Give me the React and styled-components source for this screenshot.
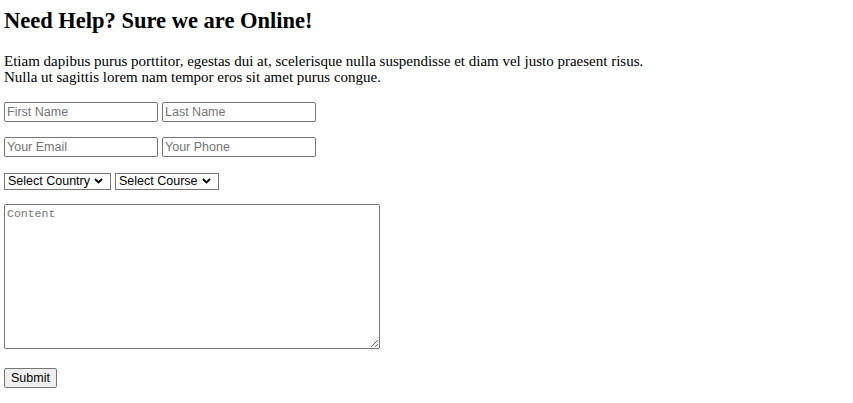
import React from "react";
import styled, { createGlobalStyle } from "styled-components";

const GlobalStyle = createGlobalStyle`
  html, body {
    margin: 0;
    padding: 0;
    background: #fff;
  }
  body {
    font-family: "Liberation Serif", "Times New Roman", serif;
    color: #000;
  }
`;

const Page = styled.div`
  padding: 8px 4px;
`;

const Title = styled.h2`
  margin: 0 0 19px;
  font-size: 22.5px;
  font-weight: 700;
  line-height: 26px;
`;

const Intro = styled.p`
  margin: 0;
  font-size: 15px;
  line-height: 16px;
`;

const Form = styled.form`
  display: flex;
  flex-direction: column;
  align-items: flex-start;
`;

const Row = styled.div`
  display: flex;
  gap: 4px;
  margin-top: ${(p) => p.$gap || 15}px;
`;

const Input = styled.input`
  box-sizing: border-box;
  width: 154px;
  height: 20px;
  margin: 0;
  padding: 1px 2px;
  border: 1px solid #767676;
  border-radius: 2px;
  font-family: "Liberation Sans", Arial, sans-serif;
  font-size: 12.5px;
  color: #000;
  background: #fff;

  &::placeholder {
    color: #757575;
  }
`;

const SelectBox = styled.div`
  position: relative;
  display: inline-flex;
`;

const Select = styled.select`
  box-sizing: border-box;
  appearance: none;
  height: 17px;
  width: ${(p) => p.$w}px;
  margin: 0;
  padding: 0 0 0 3px;
  border: 1px solid #767676;
  border-radius: 0;
  font-family: "Liberation Sans", Arial, sans-serif;
  font-size: 12.5px;
  line-height: 15px;
  color: #000;
  background: #fff;
`;

const Chevron = styled.svg`
  position: absolute;
  right: 8px;
  top: 5px;
  width: 9px;
  height: 6px;
  pointer-events: none;
`;

const TextArea = styled.textarea`
  box-sizing: border-box;
  margin: 14px 0 0;
  width: 376px;
  height: 145px;
  padding: 2px;
  border: 1px solid #767676;
  border-radius: 2px;
  font-family: "Liberation Mono", "DejaVu Sans Mono", monospace;
  font-size: 11.5px;

  &::placeholder {
    color: #757575;
  }
`;

const Button = styled.button`
  box-sizing: border-box;
  margin: 19px 0 0;
  height: 20px;
  padding: 1px 6px;
  border: 1px solid #767676;
  border-radius: 2px;
  background: #efefef;
  font-family: "Liberation Sans", Arial, sans-serif;
  font-size: 12.5px;
  color: #000;
`;

const Dropdown = ({ width, label }) => (
  <SelectBox>
    <Select $w={width} defaultValue="">
      <option value="">{label}</option>
    </Select>
    <Chevron viewBox="0 0 9 6">
      <path d="M1 1l3.5 3.5L8 1" fill="none" stroke="#000" strokeWidth="1.8" />
    </Chevron>
  </SelectBox>
);

const App = () => {
  return (
    <Page>
      <GlobalStyle />
      <Title>Need Help? Sure we are Online!</Title>
      <Intro>
        Etiam dapibus purus porttitor, egestas dui at, scelerisque nulla suspendisse et diam vel justo praesent risus.
        <br />
        Nulla ut sagittis lorem nam tempor eros sit amet purus congue.
      </Intro>
      <Form onSubmit={(e) => e.preventDefault()}>
        <Row $gap={17}>
          <Input placeholder="First Name" />
          <Input placeholder="Last Name" />
        </Row>
        <Row $gap={15}>
          <Input placeholder="Your Email" />
          <Input placeholder="Your Phone" />
        </Row>
        <Row $gap={16}>
          <Dropdown width={107} label="Select Country" />
          <Dropdown width={104} label="Select Course" />
        </Row>
        <TextArea placeholder="Content" />
        <Button type="submit">Submit</Button>
      </Form>
    </Page>
  );
};

export default App;
